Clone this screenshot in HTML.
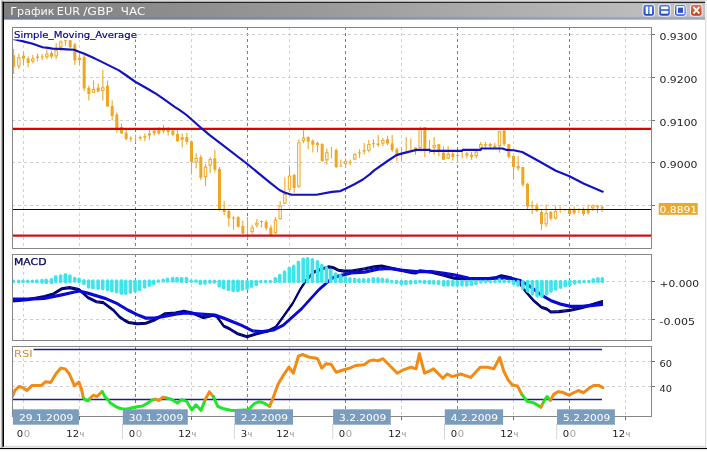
<!DOCTYPE html>
<html lang="ru"><head><meta charset="utf-8"><title>График EUR/GBP ЧАС</title>
<style>
html,body{margin:0;padding:0;background:#fff;}
body{width:707px;height:452px;overflow:hidden;position:relative;font-family:"DejaVu Sans", "Liberation Sans", sans-serif;}
svg{position:absolute;left:0;top:0;display:block;will-change:transform;opacity:0.999}
text{font-family:"DejaVu Sans", "Liberation Sans", sans-serif;}
.ax{font-size:9.1px;fill:#1c1c1c}
.sm{font-size:8px;fill:#8c8c8c}
.dt{font-size:8.8px;fill:#ffffff}
</style></head><body>
<svg width="707" height="452" viewBox="0 0 707 452">
<defs>
<linearGradient id="tb" x1="0" y1="0" x2="1" y2="0"><stop offset="0" stop-color="#7e7e7e"/><stop offset="0.45" stop-color="#9a9a9a"/><stop offset="1" stop-color="#c3c3c3"/></linearGradient>
<linearGradient id="bb" x1="0" y1="0" x2="0" y2="1"><stop offset="0" stop-color="#4f7fe6"/><stop offset="1" stop-color="#1f49bf"/></linearGradient>
<linearGradient id="rb" x1="0" y1="0" x2="0" y2="1"><stop offset="0" stop-color="#e8714f"/><stop offset="1" stop-color="#c23a1c"/></linearGradient>
<linearGradient id="tl" x1="0" y1="0" x2="0" y2="1"><stop offset="0" stop-color="#5a70c8" stop-opacity="0"/><stop offset="0.6" stop-color="#5468b4" stop-opacity="0.33"/><stop offset="1" stop-color="#6274c4" stop-opacity="0.5"/></linearGradient>
<clipPath id="cm"><rect x="12.5" y="27" width="639.5" height="221.5"/></clipPath>
<clipPath id="cd"><rect x="12.5" y="254" width="639.5" height="86.5"/></clipPath>
<clipPath id="cr"><rect x="12.5" y="346" width="639.5" height="80"/></clipPath>
</defs>

<rect x="0" y="0" width="707" height="452" fill="#ffffff"/>
<rect x="2" y="0" width="704" height="2" fill="#dcd8d8"/>
<rect x="0" y="0" width="1.2" height="448" fill="#f2f2f2"/>
<rect x="1.2" y="0" width="1.2" height="448" fill="#b0b0b0"/>
<rect x="2.4" y="1.8" width="1.6" height="445" fill="#000000"/>
<rect x="2.4" y="1.8" width="702.8" height="1.1" fill="#000000"/>
<rect x="0" y="447.9" width="707" height="1.2" fill="#000000"/>
<rect x="705.2" y="0" width="2" height="3" fill="#ececec"/>
<rect x="4" y="2.9" width="701.2" height="16.6" fill="url(#tb)"/>
<rect x="4" y="16.2" width="701.2" height="3.4" fill="url(#tl)"/>
<rect x="705.2" y="19" width="1" height="428" fill="#d6d6d6"/>
<rect x="4" y="445.8" width="702" height="1" fill="#d0d0d0"/>
<rect x="705.3" y="0" width="1.7" height="19.5" fill="#ececec"/>
<text x="10.3" y="15.1" font-size="11" fill="#fafafa" textLength="44.2" lengthAdjust="spacingAndGlyphs">График</text>
<text x="56.8" y="15.1" font-size="11" fill="#fafafa" textLength="23.2" lengthAdjust="spacingAndGlyphs">EUR</text>
<text x="83.2" y="15.1" font-size="11" fill="#fafafa" textLength="29.8" lengthAdjust="spacingAndGlyphs">/GBP</text>
<text x="120.8" y="15.1" font-size="11" fill="#fafafa" textLength="24.6" lengthAdjust="spacingAndGlyphs">ЧАС</text>
<rect x="642.5" y="3.9" width="12.4" height="12.7" rx="3" fill="#ffffff" opacity="0.9"/>
<rect x="643.4" y="4.7" width="10.6" height="11.1" rx="2.4" fill="url(#bb)"/>
<rect x="645.7" y="6.6" width="2.5" height="7.4" fill="#fff"/><rect x="649.5" y="6.6" width="2.5" height="7.4" fill="#fff"/>
<rect x="658.3" y="3.9" width="12.4" height="12.7" rx="3" fill="#ffffff" opacity="0.9"/>
<rect x="659.1999999999999" y="4.7" width="10.6" height="11.1" rx="2.4" fill="url(#bb)"/>
<rect x="661.0999999999999" y="6.5" width="7.2" height="2.7" fill="#fff"/><rect x="661.0999999999999" y="10.9" width="7.2" height="2.7" fill="#fff"/>
<rect x="674.1" y="3.9" width="12.4" height="12.7" rx="3" fill="#ffffff" opacity="0.9"/>
<rect x="675.0" y="4.7" width="10.6" height="11.1" rx="2.4" fill="url(#bb)"/>
<rect x="677.2" y="6.8" width="6.6" height="6.8" fill="none" stroke="#fff" stroke-width="1.5"/><rect x="678.4" y="8.2" width="4.2" height="4" fill="#2c50c0"/>
<rect x="690.1" y="3.9" width="12.4" height="12.7" rx="3" fill="#ffffff" opacity="0.9"/>
<rect x="691.0" y="4.7" width="10.6" height="11.1" rx="2.4" fill="url(#rb)"/>
<path d="M694.0 7.6 L698.8000000000001 12.8 M698.8000000000001 7.6 L694.0 12.8" stroke="#fff" stroke-width="1.9" stroke-linecap="square"/>
<rect x="12.5" y="27.5" width="639.0" height="221.0" fill="#ffffff"/>
<line x1="23.5" y1="27.0" x2="23.5" y2="248.5" stroke="#d2d2d2" stroke-width="1" stroke-dasharray="3 3"/>
<line x1="79.5" y1="27.0" x2="79.5" y2="248.5" stroke="#d2d2d2" stroke-width="1" stroke-dasharray="3 3"/>
<line x1="135.5" y1="27.0" x2="135.5" y2="248.5" stroke="#7c7c84" stroke-width="1" stroke-dasharray="3 3"/>
<line x1="191.5" y1="27.0" x2="191.5" y2="248.5" stroke="#d2d2d2" stroke-width="1" stroke-dasharray="3 3"/>
<line x1="247.5" y1="27.0" x2="247.5" y2="248.5" stroke="#7c7c84" stroke-width="1" stroke-dasharray="3 3"/>
<line x1="289.5" y1="27.0" x2="289.5" y2="248.5" stroke="#d2d2d2" stroke-width="1" stroke-dasharray="3 3"/>
<line x1="345.5" y1="27.0" x2="345.5" y2="248.5" stroke="#7c7c84" stroke-width="1" stroke-dasharray="3 3"/>
<line x1="401.5" y1="27.0" x2="401.5" y2="248.5" stroke="#d2d2d2" stroke-width="1" stroke-dasharray="3 3"/>
<line x1="457.5" y1="27.0" x2="457.5" y2="248.5" stroke="#7c7c84" stroke-width="1" stroke-dasharray="3 3"/>
<line x1="513.5" y1="27.0" x2="513.5" y2="248.5" stroke="#d2d2d2" stroke-width="1" stroke-dasharray="3 3"/>
<line x1="569.5" y1="27.0" x2="569.5" y2="248.5" stroke="#7c7c84" stroke-width="1" stroke-dasharray="3 3"/>
<line x1="625.5" y1="27.0" x2="625.5" y2="248.5" stroke="#d2d2d2" stroke-width="1" stroke-dasharray="3 3"/>
<line x1="12" y1="34.5" x2="651.5" y2="34.5" stroke="#cecece" stroke-width="1" stroke-dasharray="3 3"/>
<line x1="651.5" y1="34.5" x2="655.0" y2="34.5" stroke="#707070" stroke-width="1"/>
<line x1="12" y1="77.5" x2="651.5" y2="77.5" stroke="#cecece" stroke-width="1" stroke-dasharray="3 3"/>
<line x1="651.5" y1="77.5" x2="655.0" y2="77.5" stroke="#707070" stroke-width="1"/>
<line x1="12" y1="120.5" x2="651.5" y2="120.5" stroke="#cecece" stroke-width="1" stroke-dasharray="3 3"/>
<line x1="651.5" y1="120.5" x2="655.0" y2="120.5" stroke="#707070" stroke-width="1"/>
<line x1="12" y1="162.5" x2="651.5" y2="162.5" stroke="#cecece" stroke-width="1" stroke-dasharray="3 3"/>
<line x1="651.5" y1="162.5" x2="655.0" y2="162.5" stroke="#707070" stroke-width="1"/>
<line x1="12" y1="205.5" x2="651.5" y2="205.5" stroke="#cecece" stroke-width="1" stroke-dasharray="3 3"/>
<line x1="651.5" y1="205.5" x2="655.0" y2="205.5" stroke="#707070" stroke-width="1"/>
<rect x="12.5" y="254.5" width="639.0" height="86.0" fill="#ffffff"/>
<line x1="23.5" y1="254.0" x2="23.5" y2="340.5" stroke="#d2d2d2" stroke-width="1" stroke-dasharray="3 3"/>
<line x1="79.5" y1="254.0" x2="79.5" y2="340.5" stroke="#d2d2d2" stroke-width="1" stroke-dasharray="3 3"/>
<line x1="135.5" y1="254.0" x2="135.5" y2="340.5" stroke="#7c7c84" stroke-width="1" stroke-dasharray="3 3"/>
<line x1="191.5" y1="254.0" x2="191.5" y2="340.5" stroke="#d2d2d2" stroke-width="1" stroke-dasharray="3 3"/>
<line x1="247.5" y1="254.0" x2="247.5" y2="340.5" stroke="#7c7c84" stroke-width="1" stroke-dasharray="3 3"/>
<line x1="289.5" y1="254.0" x2="289.5" y2="340.5" stroke="#d2d2d2" stroke-width="1" stroke-dasharray="3 3"/>
<line x1="345.5" y1="254.0" x2="345.5" y2="340.5" stroke="#7c7c84" stroke-width="1" stroke-dasharray="3 3"/>
<line x1="401.5" y1="254.0" x2="401.5" y2="340.5" stroke="#d2d2d2" stroke-width="1" stroke-dasharray="3 3"/>
<line x1="457.5" y1="254.0" x2="457.5" y2="340.5" stroke="#7c7c84" stroke-width="1" stroke-dasharray="3 3"/>
<line x1="513.5" y1="254.0" x2="513.5" y2="340.5" stroke="#d2d2d2" stroke-width="1" stroke-dasharray="3 3"/>
<line x1="569.5" y1="254.0" x2="569.5" y2="340.5" stroke="#7c7c84" stroke-width="1" stroke-dasharray="3 3"/>
<line x1="625.5" y1="254.0" x2="625.5" y2="340.5" stroke="#d2d2d2" stroke-width="1" stroke-dasharray="3 3"/>
<line x1="12" y1="281.5" x2="651.5" y2="281.5" stroke="#cecece" stroke-width="1" stroke-dasharray="3 3"/>
<line x1="651.5" y1="281.5" x2="655.0" y2="281.5" stroke="#707070" stroke-width="1"/>
<line x1="12" y1="319.5" x2="651.5" y2="319.5" stroke="#cecece" stroke-width="1" stroke-dasharray="3 3"/>
<line x1="651.5" y1="319.5" x2="655.0" y2="319.5" stroke="#707070" stroke-width="1"/>
<rect x="12.5" y="346.5" width="639.0" height="70.0" fill="#ffffff"/>
<line x1="23.5" y1="346.0" x2="23.5" y2="416.5" stroke="#d2d2d2" stroke-width="1" stroke-dasharray="3 3"/>
<line x1="79.5" y1="346.0" x2="79.5" y2="416.5" stroke="#d2d2d2" stroke-width="1" stroke-dasharray="3 3"/>
<line x1="135.5" y1="346.0" x2="135.5" y2="416.5" stroke="#7c7c84" stroke-width="1" stroke-dasharray="3 3"/>
<line x1="191.5" y1="346.0" x2="191.5" y2="416.5" stroke="#d2d2d2" stroke-width="1" stroke-dasharray="3 3"/>
<line x1="247.5" y1="346.0" x2="247.5" y2="416.5" stroke="#7c7c84" stroke-width="1" stroke-dasharray="3 3"/>
<line x1="289.5" y1="346.0" x2="289.5" y2="416.5" stroke="#d2d2d2" stroke-width="1" stroke-dasharray="3 3"/>
<line x1="345.5" y1="346.0" x2="345.5" y2="416.5" stroke="#7c7c84" stroke-width="1" stroke-dasharray="3 3"/>
<line x1="401.5" y1="346.0" x2="401.5" y2="416.5" stroke="#d2d2d2" stroke-width="1" stroke-dasharray="3 3"/>
<line x1="457.5" y1="346.0" x2="457.5" y2="416.5" stroke="#7c7c84" stroke-width="1" stroke-dasharray="3 3"/>
<line x1="513.5" y1="346.0" x2="513.5" y2="416.5" stroke="#d2d2d2" stroke-width="1" stroke-dasharray="3 3"/>
<line x1="569.5" y1="346.0" x2="569.5" y2="416.5" stroke="#7c7c84" stroke-width="1" stroke-dasharray="3 3"/>
<line x1="625.5" y1="346.0" x2="625.5" y2="416.5" stroke="#d2d2d2" stroke-width="1" stroke-dasharray="3 3"/>
<line x1="12" y1="361.5" x2="651.5" y2="361.5" stroke="#cecece" stroke-width="1" stroke-dasharray="3 3"/>
<line x1="651.5" y1="361.5" x2="655.0" y2="361.5" stroke="#707070" stroke-width="1"/>
<line x1="12" y1="386.5" x2="651.5" y2="386.5" stroke="#cecece" stroke-width="1" stroke-dasharray="3 3"/>
<line x1="651.5" y1="386.5" x2="655.0" y2="386.5" stroke="#707070" stroke-width="1"/>
<g clip-path="url(#cm)">
<line x1="13.60" y1="49" x2="13.60" y2="74" stroke="#eea724" stroke-width="1.1"/>
<rect x="12.10" y="55.4" width="3" height="11.6" fill="#eea724"/>
<line x1="18.84" y1="53.6" x2="18.84" y2="69.2" stroke="#eea724" stroke-width="1.1"/>
<rect x="17.64" y="57.6" width="2.4" height="8.4" fill="#fffdf4" stroke="#eea724" stroke-width="1"/>
<line x1="23.50" y1="51.5" x2="23.50" y2="65" stroke="#eea724" stroke-width="1.1"/>
<rect x="22.00" y="55.7" width="3" height="2.9" fill="#eea724"/>
<line x1="28.17" y1="56.5" x2="28.17" y2="67" stroke="#eea724" stroke-width="1.1"/>
<rect x="26.67" y="58.6" width="3" height="4.2" fill="#eea724"/>
<line x1="32.84" y1="55" x2="32.84" y2="63.5" stroke="#eea724" stroke-width="1.1"/>
<rect x="31.64" y="58.699999999999996" width="2.4" height="2.3" fill="#fffdf4" stroke="#eea724" stroke-width="1"/>
<line x1="37.50" y1="53.6" x2="37.50" y2="61.4" stroke="#eea724" stroke-width="1.1"/>
<rect x="36.00" y="56.5" width="3" height="1.5" fill="#eea724"/>
<line x1="42.17" y1="54.3" x2="42.17" y2="60" stroke="#eea724" stroke-width="1.1"/>
<rect x="40.67" y="56.5" width="3" height="1.0" fill="#eea724"/>
<line x1="46.84" y1="49.4" x2="46.84" y2="59.3" stroke="#eea724" stroke-width="1.1"/>
<rect x="45.64" y="54.0" width="2.4" height="2.8" fill="#fffdf4" stroke="#eea724" stroke-width="1"/>
<line x1="51.50" y1="50.8" x2="51.50" y2="58.6" stroke="#eea724" stroke-width="1.1"/>
<rect x="50.00" y="52.9" width="3" height="3.6" fill="#eea724"/>
<line x1="56.17" y1="43.3" x2="56.17" y2="59.3" stroke="#eea724" stroke-width="1.1"/>
<rect x="54.97" y="50.4" width="2.4" height="5.5" fill="#fffdf4" stroke="#eea724" stroke-width="1"/>
<line x1="60.84" y1="40.2" x2="60.84" y2="51.5" stroke="#eea724" stroke-width="1.1"/>
<rect x="59.64" y="42.0" width="2.4" height="4.8" fill="#fffdf4" stroke="#eea724" stroke-width="1"/>
<line x1="65.50" y1="40.2" x2="65.50" y2="45.8" stroke="#eea724" stroke-width="1.1"/>
<rect x="64.00" y="40.2" width="3" height="1.0" fill="#eea724"/>
<line x1="70.17" y1="40.2" x2="70.17" y2="48" stroke="#eea724" stroke-width="1.1"/>
<rect x="68.67" y="40.2" width="3" height="7.0" fill="#eea724"/>
<line x1="74.84" y1="43" x2="74.84" y2="65" stroke="#eea724" stroke-width="1.1"/>
<rect x="73.34" y="44.5" width="3" height="16.0" fill="#eea724"/>
<line x1="79.50" y1="53.6" x2="79.50" y2="65" stroke="#eea724" stroke-width="1.1"/>
<rect x="78.00" y="57.9" width="3" height="2.1" fill="#eea724"/>
<line x1="84.17" y1="55" x2="84.17" y2="91.2" stroke="#eea724" stroke-width="1.1"/>
<rect x="82.67" y="57.2" width="3" height="31.2" fill="#eea724"/>
<line x1="88.84" y1="85.6" x2="88.84" y2="100.5" stroke="#eea724" stroke-width="1.1"/>
<rect x="87.34" y="87.7" width="3" height="6.3" fill="#eea724"/>
<line x1="93.50" y1="80.6" x2="93.50" y2="92.7" stroke="#eea724" stroke-width="1.1"/>
<rect x="92.30" y="89.4" width="2.4" height="2.9" fill="#fffdf4" stroke="#eea724" stroke-width="1"/>
<line x1="98.17" y1="83.5" x2="98.17" y2="92" stroke="#eea724" stroke-width="1.1"/>
<rect x="96.67" y="87.7" width="3" height="3.8" fill="#eea724"/>
<line x1="102.84" y1="70" x2="102.84" y2="100.5" stroke="#eea724" stroke-width="1.1"/>
<rect x="101.64" y="87.7" width="2.4" height="2.9" fill="#fffdf4" stroke="#eea724" stroke-width="1"/>
<line x1="107.50" y1="80.6" x2="107.50" y2="106.8" stroke="#eea724" stroke-width="1.1"/>
<rect x="106.00" y="85.6" width="3" height="20.9" fill="#eea724"/>
<line x1="112.17" y1="100.5" x2="112.17" y2="120.3" stroke="#eea724" stroke-width="1.1"/>
<rect x="110.67" y="106" width="3" height="10.0" fill="#eea724"/>
<line x1="116.84" y1="112.5" x2="116.84" y2="132.7" stroke="#eea724" stroke-width="1.1"/>
<rect x="115.34" y="114.6" width="3" height="14.9" fill="#eea724"/>
<line x1="121.50" y1="123.5" x2="121.50" y2="134" stroke="#eea724" stroke-width="1.1"/>
<rect x="120.00" y="127" width="3" height="6.4" fill="#eea724"/>
<line x1="126.17" y1="129" x2="126.17" y2="140.5" stroke="#eea724" stroke-width="1.1"/>
<rect x="124.67" y="132.7" width="3" height="6.3" fill="#eea724"/>
<line x1="130.84" y1="136.2" x2="130.84" y2="142" stroke="#eea724" stroke-width="1.1"/>
<rect x="129.34" y="137.7" width="3" height="1.0" fill="#eea724"/>
<line x1="135.50" y1="134.8" x2="135.50" y2="142.6" stroke="#eea724" stroke-width="1.1"/>
<line x1="140.17" y1="135.5" x2="140.17" y2="140.5" stroke="#eea724" stroke-width="1.1"/>
<rect x="138.67" y="137" width="3" height="1.4" fill="#eea724"/>
<line x1="144.84" y1="133.4" x2="144.84" y2="141.2" stroke="#eea724" stroke-width="1.1"/>
<rect x="143.34" y="136.2" width="3" height="1.5" fill="#eea724"/>
<line x1="149.50" y1="128.5" x2="149.50" y2="139.8" stroke="#eea724" stroke-width="1.1"/>
<rect x="148.00" y="133.4" width="3" height="2.1" fill="#eea724"/>
<line x1="154.17" y1="127.7" x2="154.17" y2="135.5" stroke="#eea724" stroke-width="1.1"/>
<rect x="152.67" y="130.6" width="3" height="2.8" fill="#eea724"/>
<line x1="158.84" y1="127" x2="158.84" y2="134.8" stroke="#eea724" stroke-width="1.1"/>
<rect x="157.34" y="129.9" width="3" height="3.5" fill="#eea724"/>
<line x1="163.50" y1="124.9" x2="163.50" y2="133.4" stroke="#eea724" stroke-width="1.1"/>
<rect x="162.00" y="128.5" width="3" height="2.8" fill="#eea724"/>
<line x1="168.17" y1="127" x2="168.17" y2="135.5" stroke="#eea724" stroke-width="1.1"/>
<rect x="166.67" y="129.2" width="3" height="2.8" fill="#eea724"/>
<line x1="172.84" y1="129.9" x2="172.84" y2="136.2" stroke="#eea724" stroke-width="1.1"/>
<rect x="171.34" y="130.6" width="3" height="4.2" fill="#eea724"/>
<line x1="177.50" y1="129.2" x2="177.50" y2="141.9" stroke="#eea724" stroke-width="1.1"/>
<rect x="176.00" y="134" width="3" height="7.2" fill="#eea724"/>
<line x1="182.17" y1="133.4" x2="182.17" y2="147.6" stroke="#eea724" stroke-width="1.1"/>
<rect x="180.67" y="137" width="3" height="2.8" fill="#eea724"/>
<line x1="186.84" y1="132.7" x2="186.84" y2="144.7" stroke="#eea724" stroke-width="1.1"/>
<rect x="185.34" y="137" width="3" height="4.9" fill="#eea724"/>
<line x1="191.50" y1="140.5" x2="191.50" y2="174.5" stroke="#eea724" stroke-width="1.1"/>
<rect x="190.00" y="141.3" width="3" height="20.7" fill="#eea724"/>
<line x1="196.17" y1="153.3" x2="196.17" y2="168.5" stroke="#eea724" stroke-width="1.1"/>
<rect x="194.97" y="158.4" width="2.4" height="3.5" fill="#fffdf4" stroke="#eea724" stroke-width="1"/>
<line x1="200.84" y1="155" x2="200.84" y2="180.3" stroke="#eea724" stroke-width="1.1"/>
<rect x="199.34" y="157" width="3" height="20.7" fill="#eea724"/>
<line x1="205.50" y1="164" x2="205.50" y2="186" stroke="#eea724" stroke-width="1.1"/>
<rect x="204.30" y="167.20000000000002" width="2.4" height="9.4" fill="#fffdf4" stroke="#eea724" stroke-width="1"/>
<line x1="210.17" y1="157" x2="210.17" y2="173.2" stroke="#eea724" stroke-width="1.1"/>
<rect x="208.97" y="159.4" width="2.4" height="5.7" fill="#fffdf4" stroke="#eea724" stroke-width="1"/>
<line x1="214.84" y1="149.9" x2="214.84" y2="172.5" stroke="#eea724" stroke-width="1.1"/>
<rect x="213.34" y="158.4" width="3" height="11.3" fill="#eea724"/>
<line x1="219.50" y1="167" x2="219.50" y2="210.5" stroke="#eea724" stroke-width="1.1"/>
<rect x="218.00" y="169" width="3" height="40.0" fill="#eea724"/>
<line x1="224.17" y1="201.3" x2="224.17" y2="215.5" stroke="#eea724" stroke-width="1.1"/>
<rect x="222.67" y="209.8" width="3" height="2.2" fill="#eea724"/>
<line x1="228.84" y1="209.8" x2="228.84" y2="226.8" stroke="#eea724" stroke-width="1.1"/>
<rect x="227.34" y="211" width="3" height="7.3" fill="#eea724"/>
<line x1="233.50" y1="216.2" x2="233.50" y2="229.7" stroke="#eea724" stroke-width="1.1"/>
<rect x="232.00" y="217.6" width="3" height="1.0" fill="#eea724"/>
<line x1="238.17" y1="216.2" x2="238.17" y2="227.5" stroke="#eea724" stroke-width="1.1"/>
<rect x="236.67" y="217" width="3" height="9.8" fill="#eea724"/>
<line x1="242.84" y1="220.5" x2="242.84" y2="234" stroke="#eea724" stroke-width="1.1"/>
<rect x="241.34" y="226" width="3" height="7.6" fill="#eea724"/>
<line x1="247.50" y1="217" x2="247.50" y2="238.9" stroke="#eea724" stroke-width="1.1"/>
<line x1="252.17" y1="224.7" x2="252.17" y2="234" stroke="#eea724" stroke-width="1.1"/>
<rect x="250.97" y="227.9" width="2.4" height="3.5" fill="#fffdf4" stroke="#eea724" stroke-width="1"/>
<line x1="256.84" y1="219" x2="256.84" y2="227.5" stroke="#eea724" stroke-width="1.1"/>
<rect x="255.64" y="223.3" width="2.4" height="1.7" fill="#fffdf4" stroke="#eea724" stroke-width="1"/>
<line x1="261.51" y1="220.5" x2="261.51" y2="227.5" stroke="#eea724" stroke-width="1.1"/>
<rect x="260.01" y="221" width="3" height="1.0" fill="#eea724"/>
<line x1="266.17" y1="219.7" x2="266.17" y2="230.4" stroke="#eea724" stroke-width="1.1"/>
<rect x="264.67" y="221.9" width="3" height="6.3" fill="#eea724"/>
<line x1="270.84" y1="224.7" x2="270.84" y2="236" stroke="#eea724" stroke-width="1.1"/>
<rect x="269.34" y="227.5" width="3" height="8.1" fill="#eea724"/>
<line x1="275.51" y1="217" x2="275.51" y2="234" stroke="#eea724" stroke-width="1.1"/>
<rect x="274.31" y="220.1" width="2.4" height="12.7" fill="#fffdf4" stroke="#eea724" stroke-width="1"/>
<line x1="280.17" y1="201.3" x2="280.17" y2="219.7" stroke="#eea724" stroke-width="1.1"/>
<rect x="278.97" y="206.0" width="2.4" height="12.6" fill="#fffdf4" stroke="#eea724" stroke-width="1"/>
<line x1="284.84" y1="177.2" x2="284.84" y2="204" stroke="#eea724" stroke-width="1.1"/>
<rect x="283.64" y="194.4" width="2.4" height="8.7" fill="#fffdf4" stroke="#eea724" stroke-width="1"/>
<line x1="289.51" y1="166.4" x2="289.51" y2="191.9" stroke="#eea724" stroke-width="1.1"/>
<rect x="288.31" y="176.1" width="2.4" height="13.1" fill="#fffdf4" stroke="#eea724" stroke-width="1"/>
<line x1="294.17" y1="174" x2="294.17" y2="192.7" stroke="#eea724" stroke-width="1.1"/>
<rect x="292.67" y="174.9" width="3" height="13.1" fill="#eea724"/>
<line x1="298.84" y1="139.3" x2="298.84" y2="188" stroke="#eea724" stroke-width="1.1"/>
<rect x="297.64" y="142.8" width="2.4" height="43.3" fill="#fffdf4" stroke="#eea724" stroke-width="1"/>
<line x1="303.51" y1="129" x2="303.51" y2="143.2" stroke="#eea724" stroke-width="1.1"/>
<rect x="302.31" y="138.1" width="2.4" height="2.3" fill="#fffdf4" stroke="#eea724" stroke-width="1"/>
<line x1="308.17" y1="136.2" x2="308.17" y2="149.3" stroke="#eea724" stroke-width="1.1"/>
<rect x="306.67" y="137" width="3" height="4.6" fill="#eea724"/>
<line x1="312.84" y1="139.3" x2="312.84" y2="152.4" stroke="#eea724" stroke-width="1.1"/>
<rect x="311.34" y="140.8" width="3" height="3.9" fill="#eea724"/>
<line x1="317.51" y1="141.6" x2="317.51" y2="152.4" stroke="#eea724" stroke-width="1.1"/>
<rect x="316.01" y="143" width="3" height="2.0" fill="#eea724"/>
<line x1="322.17" y1="143.2" x2="322.17" y2="161.7" stroke="#eea724" stroke-width="1.1"/>
<rect x="320.67" y="143.9" width="3" height="17.1" fill="#eea724"/>
<line x1="326.84" y1="148.6" x2="326.84" y2="164.8" stroke="#eea724" stroke-width="1.1"/>
<rect x="325.64" y="152.8" width="2.4" height="7.0" fill="#fffdf4" stroke="#eea724" stroke-width="1"/>
<line x1="331.51" y1="147" x2="331.51" y2="158.6" stroke="#eea724" stroke-width="1.1"/>
<line x1="336.17" y1="148.6" x2="336.17" y2="167.9" stroke="#eea724" stroke-width="1.1"/>
<rect x="334.67" y="150" width="3" height="17.2" fill="#eea724"/>
<line x1="340.84" y1="159.4" x2="340.84" y2="166.4" stroke="#eea724" stroke-width="1.1"/>
<rect x="339.34" y="165.6" width="3" height="1.0" fill="#eea724"/>
<line x1="345.51" y1="158.6" x2="345.51" y2="167.9" stroke="#eea724" stroke-width="1.1"/>
<rect x="344.31" y="161.4" width="2.4" height="2.2" fill="#fffdf4" stroke="#eea724" stroke-width="1"/>
<line x1="350.17" y1="159.4" x2="350.17" y2="165.6" stroke="#eea724" stroke-width="1.1"/>
<rect x="348.67" y="161.7" width="3" height="1.0" fill="#eea724"/>
<line x1="354.84" y1="153.2" x2="354.84" y2="160.2" stroke="#eea724" stroke-width="1.1"/>
<rect x="353.64" y="154.4" width="2.4" height="4.6" fill="#fffdf4" stroke="#eea724" stroke-width="1"/>
<line x1="359.51" y1="149.3" x2="359.51" y2="157.9" stroke="#eea724" stroke-width="1.1"/>
<rect x="358.01" y="152.4" width="3" height="1.0" fill="#eea724"/>
<line x1="364.17" y1="143" x2="364.17" y2="154.5" stroke="#eea724" stroke-width="1.1"/>
<rect x="362.67" y="150" width="3" height="1.5" fill="#eea724"/>
<line x1="368.84" y1="140" x2="368.84" y2="152.5" stroke="#eea724" stroke-width="1.1"/>
<rect x="367.64" y="144.4" width="2.4" height="5.9" fill="#fffdf4" stroke="#eea724" stroke-width="1"/>
<line x1="373.51" y1="139.2" x2="373.51" y2="147.7" stroke="#eea724" stroke-width="1.1"/>
<rect x="372.01" y="143.2" width="3" height="1.0" fill="#eea724"/>
<line x1="378.17" y1="135" x2="378.17" y2="147" stroke="#eea724" stroke-width="1.1"/>
<rect x="376.67" y="143.5" width="3" height="1.5" fill="#eea724"/>
<line x1="382.84" y1="137.8" x2="382.84" y2="146.3" stroke="#eea724" stroke-width="1.1"/>
<rect x="381.64" y="140.4" width="2.4" height="2.7" fill="#fffdf4" stroke="#eea724" stroke-width="1"/>
<line x1="387.51" y1="135.7" x2="387.51" y2="145" stroke="#eea724" stroke-width="1.1"/>
<rect x="386.01" y="139.2" width="3" height="4.3" fill="#eea724"/>
<line x1="392.17" y1="135" x2="392.17" y2="152" stroke="#eea724" stroke-width="1.1"/>
<rect x="390.67" y="143.5" width="3" height="6.5" fill="#eea724"/>
<line x1="396.84" y1="147.7" x2="396.84" y2="161.2" stroke="#eea724" stroke-width="1.1"/>
<rect x="395.34" y="149.2" width="3" height="6.3" fill="#eea724"/>
<line x1="401.51" y1="147" x2="401.51" y2="161.2" stroke="#eea724" stroke-width="1.1"/>
<line x1="406.17" y1="137" x2="406.17" y2="152.7" stroke="#eea724" stroke-width="1.1"/>
<line x1="410.84" y1="138.5" x2="410.84" y2="150" stroke="#eea724" stroke-width="1.1"/>
<line x1="415.51" y1="147" x2="415.51" y2="154.8" stroke="#eea724" stroke-width="1.1"/>
<rect x="414.01" y="147.7" width="3" height="2.3" fill="#eea724"/>
<line x1="420.17" y1="126.5" x2="420.17" y2="148.5" stroke="#eea724" stroke-width="1.1"/>
<rect x="418.97" y="129.4" width="2.4" height="18.2" fill="#fffdf4" stroke="#eea724" stroke-width="1"/>
<line x1="424.84" y1="127.2" x2="424.84" y2="157" stroke="#eea724" stroke-width="1.1"/>
<rect x="423.34" y="127.2" width="3" height="21.3" fill="#eea724"/>
<line x1="429.51" y1="140" x2="429.51" y2="153.4" stroke="#eea724" stroke-width="1.1"/>
<line x1="434.17" y1="137" x2="434.17" y2="154.8" stroke="#eea724" stroke-width="1.1"/>
<rect x="432.97" y="145.4" width="2.4" height="1.9" fill="#fffdf4" stroke="#eea724" stroke-width="1"/>
<line x1="438.84" y1="144.2" x2="438.84" y2="156.2" stroke="#eea724" stroke-width="1.1"/>
<rect x="437.34" y="144.2" width="3" height="5.8" fill="#eea724"/>
<line x1="443.51" y1="146.3" x2="443.51" y2="159.8" stroke="#eea724" stroke-width="1.1"/>
<rect x="442.01" y="152.7" width="3" height="7.1" fill="#eea724"/>
<line x1="448.17" y1="146.3" x2="448.17" y2="159" stroke="#eea724" stroke-width="1.1"/>
<rect x="446.97" y="154.4" width="2.4" height="3.6" fill="#fffdf4" stroke="#eea724" stroke-width="1"/>
<line x1="452.84" y1="152" x2="452.84" y2="160.5" stroke="#eea724" stroke-width="1.1"/>
<rect x="451.34" y="153.7" width="3" height="3.3" fill="#eea724"/>
<line x1="457.51" y1="151.5" x2="457.51" y2="162" stroke="#eea724" stroke-width="1.1"/>
<rect x="456.01" y="155" width="3" height="1.0" fill="#eea724"/>
<line x1="462.17" y1="150.6" x2="462.17" y2="158.4" stroke="#eea724" stroke-width="1.1"/>
<line x1="466.84" y1="152" x2="466.84" y2="158.4" stroke="#eea724" stroke-width="1.1"/>
<rect x="465.34" y="153.4" width="3" height="2.1" fill="#eea724"/>
<line x1="471.51" y1="152" x2="471.51" y2="159.8" stroke="#eea724" stroke-width="1.1"/>
<rect x="470.01" y="154.8" width="3" height="2.2" fill="#eea724"/>
<line x1="476.17" y1="150.6" x2="476.17" y2="158.4" stroke="#eea724" stroke-width="1.1"/>
<rect x="474.97" y="152.1" width="2.4" height="3.5" fill="#fffdf4" stroke="#eea724" stroke-width="1"/>
<line x1="480.84" y1="142" x2="480.84" y2="151.3" stroke="#eea724" stroke-width="1.1"/>
<rect x="479.64" y="144.6" width="2.4" height="3.5" fill="#fffdf4" stroke="#eea724" stroke-width="1"/>
<line x1="485.51" y1="142" x2="485.51" y2="148.5" stroke="#eea724" stroke-width="1.1"/>
<rect x="484.01" y="144.2" width="3" height="1.4" fill="#eea724"/>
<line x1="490.17" y1="142.8" x2="490.17" y2="148.5" stroke="#eea724" stroke-width="1.1"/>
<rect x="488.67" y="144" width="3" height="2.3" fill="#eea724"/>
<line x1="494.84" y1="142.8" x2="494.84" y2="148.5" stroke="#eea724" stroke-width="1.1"/>
<rect x="493.34" y="145.6" width="3" height="2.1" fill="#eea724"/>
<line x1="499.51" y1="130.7" x2="499.51" y2="152.7" stroke="#eea724" stroke-width="1.1"/>
<rect x="498.31" y="131.9" width="2.4" height="14.0" fill="#fffdf4" stroke="#eea724" stroke-width="1"/>
<line x1="504.17" y1="130" x2="504.17" y2="146.3" stroke="#eea724" stroke-width="1.1"/>
<rect x="502.67" y="130.5" width="3" height="13.7" fill="#eea724"/>
<line x1="508.84" y1="144.2" x2="508.84" y2="158.4" stroke="#eea724" stroke-width="1.1"/>
<rect x="507.34" y="144.2" width="3" height="12.8" fill="#eea724"/>
<line x1="513.51" y1="155.5" x2="513.51" y2="179" stroke="#eea724" stroke-width="1.1"/>
<rect x="512.01" y="156" width="3" height="11.0" fill="#eea724"/>
<line x1="518.17" y1="156" x2="518.17" y2="170.5" stroke="#eea724" stroke-width="1.1"/>
<rect x="516.67" y="166" width="3" height="2.5" fill="#eea724"/>
<line x1="522.84" y1="167" x2="522.84" y2="186.7" stroke="#eea724" stroke-width="1.1"/>
<rect x="521.34" y="167" width="3" height="17.8" fill="#eea724"/>
<line x1="527.51" y1="183" x2="527.51" y2="209.2" stroke="#eea724" stroke-width="1.1"/>
<rect x="526.01" y="183.8" width="3" height="22.6" fill="#eea724"/>
<line x1="532.17" y1="200.8" x2="532.17" y2="213.9" stroke="#eea724" stroke-width="1.1"/>
<rect x="530.67" y="205" width="3" height="1.4" fill="#eea724"/>
<line x1="536.84" y1="203.6" x2="536.84" y2="212" stroke="#eea724" stroke-width="1.1"/>
<rect x="535.34" y="205.5" width="3" height="5.5" fill="#eea724"/>
<line x1="541.51" y1="209.2" x2="541.51" y2="229.9" stroke="#eea724" stroke-width="1.1"/>
<rect x="540.01" y="212" width="3" height="12.2" fill="#eea724"/>
<line x1="546.17" y1="204.5" x2="546.17" y2="227" stroke="#eea724" stroke-width="1.1"/>
<rect x="544.97" y="213.4" width="2.4" height="10.4" fill="#fffdf4" stroke="#eea724" stroke-width="1"/>
<line x1="550.84" y1="211" x2="550.84" y2="220.5" stroke="#eea724" stroke-width="1.1"/>
<rect x="549.34" y="212" width="3" height="6.6" fill="#eea724"/>
<line x1="555.51" y1="205.5" x2="555.51" y2="219.5" stroke="#eea724" stroke-width="1.1"/>
<rect x="554.31" y="211.4" width="2.4" height="6.8" fill="#fffdf4" stroke="#eea724" stroke-width="1"/>
<line x1="560.17" y1="206.4" x2="560.17" y2="213" stroke="#eea724" stroke-width="1.1"/>
<line x1="564.84" y1="209.2" x2="564.84" y2="211" stroke="#eea724" stroke-width="1.1"/>
<line x1="569.51" y1="207.3" x2="569.51" y2="214.8" stroke="#eea724" stroke-width="1.1"/>
<rect x="568.01" y="209.8" width="3" height="4.2" fill="#eea724"/>
<line x1="574.17" y1="206.4" x2="574.17" y2="214.8" stroke="#eea724" stroke-width="1.1"/>
<rect x="572.67" y="210" width="3" height="3.0" fill="#eea724"/>
<line x1="578.84" y1="208.3" x2="578.84" y2="213" stroke="#eea724" stroke-width="1.1"/>
<line x1="583.51" y1="207.3" x2="583.51" y2="215.8" stroke="#eea724" stroke-width="1.1"/>
<rect x="582.01" y="209.2" width="3" height="4.8" fill="#eea724"/>
<line x1="588.17" y1="204.5" x2="588.17" y2="214.8" stroke="#eea724" stroke-width="1.1"/>
<rect x="586.67" y="210" width="3" height="3.0" fill="#eea724"/>
<line x1="592.84" y1="204.5" x2="592.84" y2="211" stroke="#eea724" stroke-width="1.1"/>
<rect x="591.64" y="205.9" width="2.4" height="2.0" fill="#fffdf4" stroke="#eea724" stroke-width="1"/>
<line x1="597.51" y1="205.5" x2="597.51" y2="213" stroke="#eea724" stroke-width="1.1"/>
<rect x="596.01" y="205.5" width="3" height="1.8" fill="#eea724"/>
<line x1="602.17" y1="205.5" x2="602.17" y2="212" stroke="#eea724" stroke-width="1.1"/>
<rect x="600.67" y="207" width="3" height="1.5" fill="#eea724"/>
<line x1="12.5" y1="209.5" x2="651.5" y2="209.5" stroke="#101010" stroke-width="1.2"/>
<line x1="12.5" y1="128.8" x2="651.5" y2="128.8" stroke="#e00000" stroke-width="2.2"/>
<line x1="12.5" y1="235.7" x2="651.5" y2="235.7" stroke="#c81414" stroke-width="2.2"/>
<polyline fill="none" stroke="#1212c4" stroke-width="2.15" stroke-linejoin="round" stroke-linecap="round" points="12.5,38.8 24.2,41.6 32.7,43.7 42.6,47.2 48,47.9 52.5,48.6 60,48.9 66.7,49.4 74,49.8 79.6,52.0 83.8,53.6 95,58.6 99.8,60.9 109.8,65.9 118.9,70.4 125.7,75 135.6,82 145.8,87.7 154.3,92.7 162.8,98.3 175,107.1 179.4,109.8 186.5,115 202,128.7 210,135.3 222.5,144.9 247.3,164 270,182.6 279.4,190 284.4,192.5 291.7,194.7 316.4,194.7 331.9,191.9 340.4,191.1 345.4,188.8 354.4,184.2 362.9,179.5 370,174.1 374.2,170.4 388.3,160.5 396.4,155.1 402.5,153.4 412.4,150.9 416.7,149.9 429.4,149.9 430.8,150.9 462,150.9 462.7,149.9 480.5,149.9 481.4,148.5 502.4,148.5 506.7,149.9 513.7,150.3 522.2,152 535,159 542.6,163.2 555.8,170.7 569.5,176.3 584,183.8 602.7,191.7"/>
</g>
<rect x="13" y="28" width="125" height="11.5" fill="#ffffff"/>
<text x="14" y="37.8" font-size="9" fill="#000080" stroke="#000080" stroke-width="0.15" textLength="123" lengthAdjust="spacingAndGlyphs">Simple_Moving_Average</text>
<g clip-path="url(#cd)">
<polyline fill="none" stroke="#000078" stroke-width="1.35" stroke-linejoin="round" stroke-linecap="round" points="12.5,300.0 27.3,298.8 44.5,295.6 53.2,293.1 61.8,287.9 69.6,286.7 79.1,288.7 87.7,296.5 96.4,300.8 103.3,301.7 113.6,309.5 120,316.4 124,319.0 128.6,321.6 137.3,322.9 145.9,322.4 154.5,319.0 164.9,312.9 175.3,312.1 183.9,310.3 192.5,312.1 202.9,316.7 213.3,314.3 216.7,315.5 223.6,325.0 230,328.2 237.6,332.9 247.1,335.8 256.6,332.9 268,330.1 275.6,326.3 283.2,315.8 292.7,302.5 300.3,288.3 306,279.7 313.7,271.2 321.3,268.3 328.9,266.0 333.6,266.8 338.4,269.3 344.1,270.2 351.4,270.2 364.7,267.9 374.2,266.0 381.8,265.1 389.4,266.8 400.8,269.3 412.2,271.7 416,272.1 419.8,269.8 431.3,271.2 442.7,274.0 454,277.4 461.4,277.8 472.8,277.8 488,277.8 495.6,276.9 501.3,275.0 510.8,276.9 518.4,280.7 526,291.1 533.7,299.7 541.3,306.3 547,308.2 550.8,311.1 559,310.7 570.4,309.4 581.8,306.7 593.2,303.5 602.4,300.6"/>
<polyline fill="none" stroke="#000078" stroke-width="1.35" stroke-linejoin="round" stroke-linecap="round" points="12.5,300.9 27.3,299.7 44.5,296.5 53.2,294.0 61.8,288.8 69.6,287.6 79.1,289.6 87.7,297.4 96.4,301.7 103.3,302.6 113.6,310.4 120,317.3 124,319.9 128.6,322.5 137.3,323.8 145.9,323.3 154.5,319.9 164.9,313.8 175.3,313.0 183.9,311.2 192.5,313.0 202.9,317.6 213.3,315.2 216.7,316.4 223.6,325.9 230,329.1 237.6,333.8 247.1,336.7 256.6,333.8 268,331.0 275.6,327.2 283.2,316.7 292.7,303.4 300.3,289.2 306,280.6 313.7,272.1 321.3,269.2 328.9,266.9 333.6,267.7 338.4,270.2 344.1,271.1 351.4,271.1 364.7,268.8 374.2,266.9 381.8,266.0 389.4,267.7 400.8,270.2 412.2,272.6 416,273.0 419.8,270.7 431.3,272.1 442.7,274.9 454,278.3 461.4,278.7 472.8,278.7 488,278.7 495.6,277.8 501.3,275.9 510.8,277.8 518.4,281.6 526,292.0 533.7,300.6 541.3,307.2 547,309.1 550.8,312.0 559,311.6 570.4,310.3 581.8,307.6 593.2,304.4 602.4,301.5"/>
<polyline fill="none" stroke="#000078" stroke-width="1.35" stroke-linejoin="round" stroke-linecap="round" points="12.5,301.8 27.3,300.6 44.5,297.4 53.2,294.9 61.8,289.7 69.6,288.5 79.1,290.5 87.7,298.3 96.4,302.6 103.3,303.5 113.6,311.3 120,318.2 124,320.8 128.6,323.4 137.3,324.7 145.9,324.2 154.5,320.8 164.9,314.7 175.3,313.9 183.9,312.1 192.5,313.9 202.9,318.5 213.3,316.1 216.7,317.3 223.6,326.8 230,330.0 237.6,334.7 247.1,337.6 256.6,334.7 268,331.9 275.6,328.1 283.2,317.6 292.7,304.3 300.3,290.1 306,281.5 313.7,273.0 321.3,270.1 328.9,267.8 333.6,268.6 338.4,271.1 344.1,272.0 351.4,272.0 364.7,269.7 374.2,267.8 381.8,266.9 389.4,268.6 400.8,271.1 412.2,273.5 416,273.9 419.8,271.6 431.3,273.0 442.7,275.8 454,279.2 461.4,279.6 472.8,279.6 488,279.6 495.6,278.7 501.3,276.8 510.8,278.7 518.4,282.5 526,292.9 533.7,301.5 541.3,308.1 547,310.0 550.8,312.9 559,312.5 570.4,311.2 581.8,308.5 593.2,305.3 602.4,302.4"/>
<polyline fill="none" stroke="#0808d8" stroke-width="1.45" stroke-linejoin="round" stroke-linecap="round" points="12.5,298.2 27.3,298.2 44.5,297.4 61.8,293.9 79.1,290.1 87.7,292.2 105,297.4 117,302.6 128.6,309.5 137.3,313.8 145.9,317.2 154.5,317.2 166.6,315.0 177,312.9 185.6,312.1 197.7,312.9 215,314.3 223.6,317.2 232.3,320.7 241.4,324.4 252.8,330.1 262.3,330.7 273.7,329.1 283.2,324.4 292.7,315.8 302.2,307.3 309.8,298.7 319.4,288.3 327,281.6 332.7,276.9 340.3,274.8 351.4,272.1 364.7,271.2 378,268.3 389.4,267.4 400.8,269.3 416,270.6 431.3,270.6 442.7,272.1 454,274.0 461,275.5 469,277.4 488,277.8 499.4,276.9 510.8,277.4 520.3,279.7 529.8,285.4 541.3,294.0 550.8,299.7 560.6,303.3 570.4,305.4 581.8,305.4 593.2,304.4 602.4,303.5"/>
<polyline fill="none" stroke="#0808d8" stroke-width="1.45" stroke-linejoin="round" stroke-linecap="round" points="12.5,299.1 27.3,299.1 44.5,298.3 61.8,294.8 79.1,291.0 87.7,293.1 105,298.3 117,303.5 128.6,310.4 137.3,314.7 145.9,318.1 154.5,318.1 166.6,315.9 177,313.8 185.6,313.0 197.7,313.8 215,315.2 223.6,318.1 232.3,321.6 241.4,325.3 252.8,331.0 262.3,331.6 273.7,330.0 283.2,325.3 292.7,316.7 302.2,308.2 309.8,299.6 319.4,289.2 327,282.5 332.7,277.8 340.3,275.7 351.4,273.0 364.7,272.1 378,269.2 389.4,268.3 400.8,270.2 416,271.5 431.3,271.5 442.7,273.0 454,274.9 461,276.4 469,278.3 488,278.7 499.4,277.8 510.8,278.3 520.3,280.6 529.8,286.3 541.3,294.9 550.8,300.6 560.6,304.2 570.4,306.3 581.8,306.3 593.2,305.3 602.4,304.4"/>
<polyline fill="none" stroke="#0808d8" stroke-width="1.45" stroke-linejoin="round" stroke-linecap="round" points="12.5,300.0 27.3,300.0 44.5,299.2 61.8,295.7 79.1,291.9 87.7,294.0 105,299.2 117,304.4 128.6,311.3 137.3,315.6 145.9,319.0 154.5,319.0 166.6,316.8 177,314.7 185.6,313.9 197.7,314.7 215,316.1 223.6,319.0 232.3,322.5 241.4,326.2 252.8,331.9 262.3,332.5 273.7,330.9 283.2,326.2 292.7,317.6 302.2,309.1 309.8,300.5 319.4,290.1 327,283.4 332.7,278.7 340.3,276.6 351.4,273.9 364.7,273.0 378,270.1 389.4,269.2 400.8,271.1 416,272.4 431.3,272.4 442.7,273.9 454,275.8 461,277.3 469,279.2 488,279.6 499.4,278.7 510.8,279.2 520.3,281.5 529.8,287.2 541.3,295.8 550.8,301.5 560.6,305.1 570.4,307.2 581.8,307.2 593.2,306.2 602.4,305.3"/>
<line x1="13.45" y1="281.5" x2="13.45" y2="281.2" stroke="#3fe4ea" stroke-width="3.6" stroke-linecap="round"/>
<line x1="18.64" y1="281.5" x2="18.64" y2="281.2" stroke="#3fe4ea" stroke-width="3.6" stroke-linecap="round"/>
<line x1="22.95" y1="281.5" x2="22.95" y2="281.2" stroke="#3fe4ea" stroke-width="3.6" stroke-linecap="round"/>
<line x1="27.79" y1="281.5" x2="27.79" y2="281.2" stroke="#3fe4ea" stroke-width="3.6" stroke-linecap="round"/>
<line x1="32.45" y1="281.5" x2="32.45" y2="281.2" stroke="#3fe4ea" stroke-width="3.6" stroke-linecap="round"/>
<line x1="36.77" y1="281.0" x2="36.77" y2="281.7" stroke="#3fe4ea" stroke-width="3.6" stroke-linecap="round"/>
<line x1="41.95" y1="280.6" x2="41.95" y2="282.1" stroke="#3fe4ea" stroke-width="3.6" stroke-linecap="round"/>
<line x1="46.27" y1="280.3" x2="46.27" y2="282.4" stroke="#3fe4ea" stroke-width="3.6" stroke-linecap="round"/>
<line x1="51.45" y1="279.9" x2="51.45" y2="282.4" stroke="#3fe4ea" stroke-width="3.6" stroke-linecap="round"/>
<line x1="55.77" y1="276.8" x2="55.77" y2="281.4" stroke="#3fe4ea" stroke-width="3.6" stroke-linecap="round"/>
<line x1="60.60" y1="276.0" x2="60.60" y2="281.4" stroke="#3fe4ea" stroke-width="3.6" stroke-linecap="round"/>
<line x1="65.27" y1="274.7" x2="65.27" y2="281.7" stroke="#3fe4ea" stroke-width="3.6" stroke-linecap="round"/>
<line x1="69.93" y1="276.0" x2="69.93" y2="281.4" stroke="#3fe4ea" stroke-width="3.6" stroke-linecap="round"/>
<line x1="74.77" y1="278.5" x2="74.77" y2="281.0" stroke="#3fe4ea" stroke-width="3.6" stroke-linecap="round"/>
<line x1="79.08" y1="279.4" x2="79.08" y2="281.4" stroke="#3fe4ea" stroke-width="3.6" stroke-linecap="round"/>
<line x1="83.92" y1="280.8" x2="83.92" y2="283.5" stroke="#3fe4ea" stroke-width="3.6" stroke-linecap="round"/>
<line x1="88.58" y1="281.1" x2="88.58" y2="286.9" stroke="#3fe4ea" stroke-width="3.6" stroke-linecap="round"/>
<line x1="92.90" y1="281.1" x2="92.90" y2="287.8" stroke="#3fe4ea" stroke-width="3.6" stroke-linecap="round"/>
<line x1="98.08" y1="281.1" x2="98.08" y2="288.3" stroke="#3fe4ea" stroke-width="3.6" stroke-linecap="round"/>
<line x1="102.75" y1="281.1" x2="102.75" y2="288.6" stroke="#3fe4ea" stroke-width="3.6" stroke-linecap="round"/>
<line x1="107.58" y1="281.1" x2="107.58" y2="289.5" stroke="#3fe4ea" stroke-width="3.6" stroke-linecap="round"/>
<line x1="111.90" y1="281.1" x2="111.90" y2="290.7" stroke="#3fe4ea" stroke-width="3.6" stroke-linecap="round"/>
<line x1="116.56" y1="281.1" x2="116.56" y2="291.7" stroke="#3fe4ea" stroke-width="3.6" stroke-linecap="round"/>
<line x1="121.40" y1="281.1" x2="121.40" y2="292.4" stroke="#3fe4ea" stroke-width="3.6" stroke-linecap="round"/>
<line x1="121.38" y1="281.3" x2="121.38" y2="293.3" stroke="#3fe4ea" stroke-width="3.6" stroke-linecap="round"/>
<line x1="125.70" y1="281.3" x2="125.70" y2="293.3" stroke="#3fe4ea" stroke-width="3.6" stroke-linecap="round"/>
<line x1="130.36" y1="281.3" x2="130.36" y2="292.1" stroke="#3fe4ea" stroke-width="3.6" stroke-linecap="round"/>
<line x1="135.03" y1="281.3" x2="135.03" y2="290.7" stroke="#3fe4ea" stroke-width="3.6" stroke-linecap="round"/>
<line x1="139.52" y1="281.3" x2="139.52" y2="289.5" stroke="#3fe4ea" stroke-width="3.6" stroke-linecap="round"/>
<line x1="144.53" y1="281.3" x2="144.53" y2="286.9" stroke="#3fe4ea" stroke-width="3.6" stroke-linecap="round"/>
<line x1="149.36" y1="281.1" x2="149.36" y2="285.2" stroke="#3fe4ea" stroke-width="3.6" stroke-linecap="round"/>
<line x1="153.68" y1="281.3" x2="153.68" y2="283.5" stroke="#3fe4ea" stroke-width="3.6" stroke-linecap="round"/>
<line x1="158.34" y1="281.3" x2="158.34" y2="281.0" stroke="#3fe4ea" stroke-width="3.6" stroke-linecap="round"/>
<line x1="163.18" y1="280.3" x2="163.18" y2="281.0" stroke="#3fe4ea" stroke-width="3.6" stroke-linecap="round"/>
<line x1="167.50" y1="279.4" x2="167.50" y2="281.0" stroke="#3fe4ea" stroke-width="3.6" stroke-linecap="round"/>
<line x1="172.68" y1="278.5" x2="172.68" y2="281.0" stroke="#3fe4ea" stroke-width="3.6" stroke-linecap="round"/>
<line x1="176.99" y1="278.5" x2="176.99" y2="281.0" stroke="#3fe4ea" stroke-width="3.6" stroke-linecap="round"/>
<line x1="181.66" y1="278.5" x2="181.66" y2="281.4" stroke="#3fe4ea" stroke-width="3.6" stroke-linecap="round"/>
<line x1="186.49" y1="278.5" x2="186.49" y2="281.4" stroke="#3fe4ea" stroke-width="3.6" stroke-linecap="round"/>
<line x1="191.16" y1="281.3" x2="191.16" y2="281.0" stroke="#3fe4ea" stroke-width="3.6" stroke-linecap="round"/>
<line x1="195.99" y1="281.3" x2="195.99" y2="281.0" stroke="#3fe4ea" stroke-width="3.6" stroke-linecap="round"/>
<line x1="200.31" y1="281.3" x2="200.31" y2="283.5" stroke="#3fe4ea" stroke-width="3.6" stroke-linecap="round"/>
<line x1="204.97" y1="281.3" x2="204.97" y2="283.1" stroke="#3fe4ea" stroke-width="3.6" stroke-linecap="round"/>
<line x1="209.81" y1="281.3" x2="209.81" y2="282.1" stroke="#3fe4ea" stroke-width="3.6" stroke-linecap="round"/>
<line x1="214.47" y1="281.3" x2="214.47" y2="282.1" stroke="#3fe4ea" stroke-width="3.6" stroke-linecap="round"/>
<line x1="219.31" y1="281.3" x2="219.31" y2="286.0" stroke="#3fe4ea" stroke-width="3.6" stroke-linecap="round"/>
<line x1="223.63" y1="281.3" x2="223.63" y2="287.8" stroke="#3fe4ea" stroke-width="3.6" stroke-linecap="round"/>
<line x1="228.46" y1="281.3" x2="228.46" y2="289.5" stroke="#3fe4ea" stroke-width="3.6" stroke-linecap="round"/>
<line x1="233.13" y1="281.3" x2="233.13" y2="290.4" stroke="#3fe4ea" stroke-width="3.6" stroke-linecap="round"/>
<line x1="237.96" y1="281.3" x2="237.96" y2="290.4" stroke="#3fe4ea" stroke-width="3.6" stroke-linecap="round"/>
<line x1="237.98" y1="281.6" x2="237.98" y2="289.7" stroke="#3fe4ea" stroke-width="3.6" stroke-linecap="round"/>
<line x1="242.36" y1="281.6" x2="242.36" y2="289.1" stroke="#3fe4ea" stroke-width="3.6" stroke-linecap="round"/>
<line x1="247.11" y1="281.6" x2="247.11" y2="288.2" stroke="#3fe4ea" stroke-width="3.6" stroke-linecap="round"/>
<line x1="251.48" y1="281.6" x2="251.48" y2="286.3" stroke="#3fe4ea" stroke-width="3.6" stroke-linecap="round"/>
<line x1="256.24" y1="281.6" x2="256.24" y2="284.4" stroke="#3fe4ea" stroke-width="3.6" stroke-linecap="round"/>
<line x1="260.80" y1="281.6" x2="260.80" y2="281.5" stroke="#3fe4ea" stroke-width="3.6" stroke-linecap="round"/>
<line x1="265.55" y1="281.6" x2="265.55" y2="281.5" stroke="#3fe4ea" stroke-width="3.6" stroke-linecap="round"/>
<line x1="270.30" y1="281.6" x2="270.30" y2="281.5" stroke="#3fe4ea" stroke-width="3.6" stroke-linecap="round"/>
<line x1="275.25" y1="278.8" x2="275.25" y2="281.5" stroke="#3fe4ea" stroke-width="3.6" stroke-linecap="round"/>
<line x1="279.81" y1="275.5" x2="279.81" y2="281.5" stroke="#3fe4ea" stroke-width="3.6" stroke-linecap="round"/>
<line x1="284.56" y1="272.1" x2="284.56" y2="281.5" stroke="#3fe4ea" stroke-width="3.6" stroke-linecap="round"/>
<line x1="289.32" y1="268.3" x2="289.32" y2="281.5" stroke="#3fe4ea" stroke-width="3.6" stroke-linecap="round"/>
<line x1="293.69" y1="266.4" x2="293.69" y2="281.5" stroke="#3fe4ea" stroke-width="3.6" stroke-linecap="round"/>
<line x1="298.44" y1="262.2" x2="298.44" y2="281.5" stroke="#3fe4ea" stroke-width="3.6" stroke-linecap="round"/>
<line x1="303.19" y1="259.2" x2="303.19" y2="281.5" stroke="#3fe4ea" stroke-width="3.6" stroke-linecap="round"/>
<line x1="307.57" y1="258.8" x2="307.57" y2="281.5" stroke="#3fe4ea" stroke-width="3.6" stroke-linecap="round"/>
<line x1="312.32" y1="259.8" x2="312.32" y2="281.5" stroke="#3fe4ea" stroke-width="3.6" stroke-linecap="round"/>
<line x1="317.45" y1="261.7" x2="317.45" y2="281.5" stroke="#3fe4ea" stroke-width="3.6" stroke-linecap="round"/>
<line x1="321.83" y1="265.5" x2="321.83" y2="281.5" stroke="#3fe4ea" stroke-width="3.6" stroke-linecap="round"/>
<line x1="326.39" y1="267.9" x2="326.39" y2="281.5" stroke="#3fe4ea" stroke-width="3.6" stroke-linecap="round"/>
<line x1="330.76" y1="270.2" x2="330.76" y2="281.5" stroke="#3fe4ea" stroke-width="3.6" stroke-linecap="round"/>
<line x1="335.51" y1="274.0" x2="335.51" y2="281.5" stroke="#3fe4ea" stroke-width="3.6" stroke-linecap="round"/>
<line x1="340.27" y1="275.9" x2="340.27" y2="281.5" stroke="#3fe4ea" stroke-width="3.6" stroke-linecap="round"/>
<line x1="340.95" y1="276.9" x2="340.95" y2="281.5" stroke="#3fe4ea" stroke-width="3.6" stroke-linecap="round"/>
<line x1="345.32" y1="277.8" x2="345.32" y2="281.5" stroke="#3fe4ea" stroke-width="3.6" stroke-linecap="round"/>
<line x1="349.89" y1="278.8" x2="349.89" y2="281.5" stroke="#3fe4ea" stroke-width="3.6" stroke-linecap="round"/>
<line x1="354.64" y1="279.3" x2="354.64" y2="281.5" stroke="#3fe4ea" stroke-width="3.6" stroke-linecap="round"/>
<line x1="359.01" y1="279.7" x2="359.01" y2="281.5" stroke="#3fe4ea" stroke-width="3.6" stroke-linecap="round"/>
<line x1="363.76" y1="279.7" x2="363.76" y2="281.5" stroke="#3fe4ea" stroke-width="3.6" stroke-linecap="round"/>
<line x1="368.52" y1="279.7" x2="368.52" y2="281.5" stroke="#3fe4ea" stroke-width="3.6" stroke-linecap="round"/>
<line x1="373.27" y1="278.8" x2="373.27" y2="281.5" stroke="#3fe4ea" stroke-width="3.6" stroke-linecap="round"/>
<line x1="378.02" y1="278.8" x2="378.02" y2="281.5" stroke="#3fe4ea" stroke-width="3.6" stroke-linecap="round"/>
<line x1="382.40" y1="279.3" x2="382.40" y2="281.5" stroke="#3fe4ea" stroke-width="3.6" stroke-linecap="round"/>
<line x1="387.15" y1="280.1" x2="387.15" y2="281.5" stroke="#3fe4ea" stroke-width="3.6" stroke-linecap="round"/>
<line x1="391.71" y1="281.6" x2="391.71" y2="281.5" stroke="#3fe4ea" stroke-width="3.6" stroke-linecap="round"/>
<line x1="396.46" y1="281.6" x2="396.46" y2="282.5" stroke="#3fe4ea" stroke-width="3.6" stroke-linecap="round"/>
<line x1="401.22" y1="281.6" x2="401.22" y2="283.4" stroke="#3fe4ea" stroke-width="3.6" stroke-linecap="round"/>
<line x1="405.97" y1="281.6" x2="405.97" y2="283.4" stroke="#3fe4ea" stroke-width="3.6" stroke-linecap="round"/>
<line x1="410.72" y1="281.6" x2="410.72" y2="283.0" stroke="#3fe4ea" stroke-width="3.6" stroke-linecap="round"/>
<line x1="415.48" y1="281.6" x2="415.48" y2="282.5" stroke="#3fe4ea" stroke-width="3.6" stroke-linecap="round"/>
<line x1="419.85" y1="281.6" x2="419.85" y2="281.5" stroke="#3fe4ea" stroke-width="3.6" stroke-linecap="round"/>
<line x1="424.60" y1="281.6" x2="424.60" y2="282.5" stroke="#3fe4ea" stroke-width="3.6" stroke-linecap="round"/>
<line x1="429.35" y1="281.6" x2="429.35" y2="283.0" stroke="#3fe4ea" stroke-width="3.6" stroke-linecap="round"/>
<line x1="433.73" y1="281.6" x2="433.73" y2="283.0" stroke="#3fe4ea" stroke-width="3.6" stroke-linecap="round"/>
<line x1="438.48" y1="281.6" x2="438.48" y2="283.4" stroke="#3fe4ea" stroke-width="3.6" stroke-linecap="round"/>
<line x1="443.61" y1="281.6" x2="443.61" y2="284.9" stroke="#3fe4ea" stroke-width="3.6" stroke-linecap="round"/>
<line x1="447.98" y1="281.6" x2="447.98" y2="284.9" stroke="#3fe4ea" stroke-width="3.6" stroke-linecap="round"/>
<line x1="452.85" y1="281.6" x2="452.85" y2="284.9" stroke="#3fe4ea" stroke-width="3.6" stroke-linecap="round"/>
<line x1="457.22" y1="281.6" x2="457.22" y2="284.9" stroke="#3fe4ea" stroke-width="3.6" stroke-linecap="round"/>
<line x1="461.98" y1="281.6" x2="461.98" y2="284.9" stroke="#3fe4ea" stroke-width="3.6" stroke-linecap="round"/>
<line x1="466.73" y1="281.6" x2="466.73" y2="284.9" stroke="#3fe4ea" stroke-width="3.6" stroke-linecap="round"/>
<line x1="471.29" y1="281.6" x2="471.29" y2="284.4" stroke="#3fe4ea" stroke-width="3.6" stroke-linecap="round"/>
<line x1="476.05" y1="281.6" x2="476.05" y2="283.4" stroke="#3fe4ea" stroke-width="3.6" stroke-linecap="round"/>
<line x1="480.80" y1="281.6" x2="480.80" y2="281.9" stroke="#3fe4ea" stroke-width="3.6" stroke-linecap="round"/>
<line x1="485.55" y1="281.6" x2="485.55" y2="281.5" stroke="#3fe4ea" stroke-width="3.6" stroke-linecap="round"/>
<line x1="490.30" y1="281.6" x2="490.30" y2="281.5" stroke="#3fe4ea" stroke-width="3.6" stroke-linecap="round"/>
<line x1="495.06" y1="281.6" x2="495.06" y2="281.5" stroke="#3fe4ea" stroke-width="3.6" stroke-linecap="round"/>
<line x1="499.43" y1="279.7" x2="499.43" y2="281.5" stroke="#3fe4ea" stroke-width="3.6" stroke-linecap="round"/>
<line x1="504.18" y1="280.7" x2="504.18" y2="281.5" stroke="#3fe4ea" stroke-width="3.6" stroke-linecap="round"/>
<line x1="508.94" y1="281.6" x2="508.94" y2="281.5" stroke="#3fe4ea" stroke-width="3.6" stroke-linecap="round"/>
<line x1="513.69" y1="281.6" x2="513.69" y2="283.4" stroke="#3fe4ea" stroke-width="3.6" stroke-linecap="round"/>
<line x1="518.06" y1="281.6" x2="518.06" y2="285.3" stroke="#3fe4ea" stroke-width="3.6" stroke-linecap="round"/>
<line x1="522.81" y1="281.6" x2="522.81" y2="288.2" stroke="#3fe4ea" stroke-width="3.6" stroke-linecap="round"/>
<line x1="527.57" y1="281.6" x2="527.57" y2="291.0" stroke="#3fe4ea" stroke-width="3.6" stroke-linecap="round"/>
<line x1="532.32" y1="281.6" x2="532.32" y2="293.9" stroke="#3fe4ea" stroke-width="3.6" stroke-linecap="round"/>
<line x1="537.07" y1="281.6" x2="537.07" y2="295.8" stroke="#3fe4ea" stroke-width="3.6" stroke-linecap="round"/>
<line x1="541.63" y1="281.6" x2="541.63" y2="295.8" stroke="#3fe4ea" stroke-width="3.6" stroke-linecap="round"/>
<line x1="541.90" y1="281.6" x2="541.90" y2="295.8" stroke="#3fe4ea" stroke-width="3.6" stroke-linecap="round"/>
<line x1="546.65" y1="281.6" x2="546.65" y2="293.9" stroke="#3fe4ea" stroke-width="3.6" stroke-linecap="round"/>
<line x1="551.03" y1="281.6" x2="551.03" y2="291.0" stroke="#3fe4ea" stroke-width="3.6" stroke-linecap="round"/>
<line x1="555.78" y1="281.6" x2="555.78" y2="289.1" stroke="#3fe4ea" stroke-width="3.6" stroke-linecap="round"/>
<line x1="560.53" y1="281.6" x2="560.53" y2="287.2" stroke="#3fe4ea" stroke-width="3.6" stroke-linecap="round"/>
<line x1="565.29" y1="281.6" x2="565.29" y2="285.7" stroke="#3fe4ea" stroke-width="3.6" stroke-linecap="round"/>
<line x1="569.85" y1="281.6" x2="569.85" y2="284.4" stroke="#3fe4ea" stroke-width="3.6" stroke-linecap="round"/>
<line x1="574.60" y1="281.6" x2="574.60" y2="283.0" stroke="#3fe4ea" stroke-width="3.6" stroke-linecap="round"/>
<line x1="579.35" y1="281.6" x2="579.35" y2="281.9" stroke="#3fe4ea" stroke-width="3.6" stroke-linecap="round"/>
<line x1="584.11" y1="281.6" x2="584.11" y2="281.5" stroke="#3fe4ea" stroke-width="3.6" stroke-linecap="round"/>
<line x1="588.86" y1="281.6" x2="588.86" y2="281.5" stroke="#3fe4ea" stroke-width="3.6" stroke-linecap="round"/>
<line x1="593.23" y1="279.7" x2="593.23" y2="281.5" stroke="#3fe4ea" stroke-width="3.6" stroke-linecap="round"/>
<line x1="597.98" y1="278.8" x2="597.98" y2="281.5" stroke="#3fe4ea" stroke-width="3.6" stroke-linecap="round"/>
<line x1="602.36" y1="278.8" x2="602.36" y2="281.5" stroke="#3fe4ea" stroke-width="3.6" stroke-linecap="round"/>
</g>
<rect x="13" y="255" width="34" height="11.5" fill="#ffffff"/>
<text x="14" y="265.3" font-size="9" fill="#000060" stroke="#000060" stroke-width="0.25" textLength="32.5" lengthAdjust="spacingAndGlyphs">MACD</text>
<line x1="12.5" y1="349.5" x2="602" y2="349.5" stroke="#1a1a9a" stroke-width="1.3"/>
<line x1="12.5" y1="399.5" x2="602" y2="399.5" stroke="#1a1a9a" stroke-width="1.3"/>
<rect x="13" y="347.5" width="20.5" height="10.5" fill="#ffffff"/>
<text x="14" y="357" font-size="9" fill="#dc8428" textLength="18.5" lengthAdjust="spacingAndGlyphs">RSI</text>
<g clip-path="url(#cr)">
<polyline fill="none" stroke="#f28a14" stroke-width="3.0" stroke-linejoin="round" stroke-linecap="round" points="12.5,396.1 15.1,390.1 19.3,386.4 22.7,387.6 27,390.5 32.1,385.4 41.4,385.4 45.7,381.7 50.7,382.5 55.8,374 60.9,368.1 65.2,368.9 69.4,374 74.5,385.9 78.8,382 81.3,388.4 83.3,397.8"/>
<polyline fill="none" stroke="#1fe626" stroke-width="3.0" stroke-linejoin="round" stroke-linecap="round" points="83.3,397.8 85.5,400.0 88.1,400.7 90.5,398"/>
<polyline fill="none" stroke="#f28a14" stroke-width="3.0" stroke-linejoin="round" stroke-linecap="round" points="90.5,398 93.2,395.2 96.6,396.6 98.4,395.1 102.2,391.6"/>
<polyline fill="none" stroke="#1fe626" stroke-width="3.0" stroke-linejoin="round" stroke-linecap="round" points="102.2,391.6 105.2,397.2 108.5,400.3 110.3,403.1 115.3,406.3 120.4,408.5 125.5,409.2 129,408.5 135.7,407 142.5,406 147.6,403.1 152.7,399.7 155.3,399.2"/>
<polyline fill="none" stroke="#f28a14" stroke-width="3.0" stroke-linejoin="round" stroke-linecap="round" points="155.3,399.2 158.7,400.6 162.9,397.2 166.3,398"/>
<polyline fill="none" stroke="#1fe626" stroke-width="3.0" stroke-linejoin="round" stroke-linecap="round" points="166.3,398 171.4,399.2 177.3,403.1 181.6,399.7 186.7,401.4 191.8,409.9 196,404.8 201.1,410.4 205.2,399.6"/>
<polyline fill="none" stroke="#f28a14" stroke-width="3.0" stroke-linejoin="round" stroke-linecap="round" points="205.2,399.6 209.3,391.9 213.5,396.9"/>
<polyline fill="none" stroke="#1fe626" stroke-width="3.0" stroke-linejoin="round" stroke-linecap="round" points="213.5,396.9 217.7,406.3 223.7,408.8 230.5,410.2 235.6,410.5 248.3,409.7 254.2,403.7 259.3,401.7 263.6,402.9 269.5,406.3"/>
<polyline fill="none" stroke="#f28a14" stroke-width="3.0" stroke-linejoin="round" stroke-linecap="round" points="269.5,406.3 272.9,398.6 278,384.2 283.1,375.7 289,367.2 293.3,373.2 298.4,356.2 302.6,354.5 308.6,357 315,357.9 317.5,358.7 321.8,368.1 326,363.8 331.1,364.3 336.2,372.3 343.9,369.8 349.8,368.1 355.7,365.5 364.2,364.7 369.3,360.9 373.6,359.9 377.8,360.9 382.9,358.7 388,363.8 397.3,373.2 403.3,369.8 410.9,367.2 416,368.9 419.4,353.6 424.5,373.2 430.4,370.6 433.5,368.9 442.8,378.3 447.1,374 452.2,376.6 460.7,374 470.8,377.4 480.2,367.2 487.8,367.2 493.8,368.9 499.7,357.5 503.9,371.5 508.2,380 512.4,385.1 517.5,385.9 521.8,394.4"/>
<polyline fill="none" stroke="#1fe626" stroke-width="3.0" stroke-linejoin="round" stroke-linecap="round" points="521.8,394.4 526.9,401.2 533.7,402.9 540.9,407.1"/>
<polyline fill="none" stroke="#f28a14" stroke-width="3.0" stroke-linejoin="round" stroke-linecap="round" points="540.9,407.1 543.5,402"/>
<polyline fill="none" stroke="#1fe626" stroke-width="3.0" stroke-linejoin="round" stroke-linecap="round" points="543.5,402 546.9,396.6 550.3,400.3"/>
<polyline fill="none" stroke="#f28a14" stroke-width="3.0" stroke-linejoin="round" stroke-linecap="round" points="550.3,400.3 553.7,394.4 557.9,391.8 562.2,392.2 569,395.2 578.3,390.5 583.4,392.7 589.3,388.1 593.6,385.4 598.7,385.4 602.9,387.6"/>
</g>
<rect x="12.5" y="27.5" width="639.0" height="221.0" fill="none" stroke="#868686" stroke-width="1"/>
<rect x="12.5" y="254.5" width="639.0" height="86.0" fill="none" stroke="#868686" stroke-width="1"/>
<rect x="12.5" y="346.5" width="639.0" height="70.0" fill="none" stroke="#868686" stroke-width="1"/>
<text class="ax" x="659.5" y="40.0" textLength="38" lengthAdjust="spacingAndGlyphs">0.9300</text>
<text class="ax" x="659.5" y="83.0" textLength="38" lengthAdjust="spacingAndGlyphs">0.9200</text>
<text class="ax" x="659.5" y="126.0" textLength="38" lengthAdjust="spacingAndGlyphs">0.9100</text>
<text class="ax" x="659.5" y="168.0" textLength="38" lengthAdjust="spacingAndGlyphs">0.9000</text>
<rect x="658.7" y="203" width="39" height="11.8" fill="#eba92a"/>
<text x="659.6" y="213" font-size="9.1" fill="#ffffff" textLength="37.6" lengthAdjust="spacingAndGlyphs">0.8891</text>
<text class="ax" x="659.5" y="287.0" textLength="39.5" lengthAdjust="spacingAndGlyphs">+0.000</text>
<text class="ax" x="659.5" y="325.0" textLength="35.5" lengthAdjust="spacingAndGlyphs">-0.005</text>
<text class="ax" x="659.5" y="367.0" textLength="12.5" lengthAdjust="spacingAndGlyphs">60</text>
<text class="ax" x="659.5" y="392.0" textLength="12.5" lengthAdjust="spacingAndGlyphs">40</text>
<line x1="122.5" y1="424" x2="122.5" y2="439" stroke="#cfd8e2" stroke-width="1"/>
<line x1="234.4" y1="424" x2="234.4" y2="439" stroke="#cfd8e2" stroke-width="1"/>
<line x1="332.8" y1="424" x2="332.8" y2="439" stroke="#cfd8e2" stroke-width="1"/>
<line x1="444.5" y1="424" x2="444.5" y2="439" stroke="#cfd8e2" stroke-width="1"/>
<line x1="556.7" y1="424" x2="556.7" y2="439" stroke="#cfd8e2" stroke-width="1"/>
<line x1="23.5" y1="416.5" x2="23.5" y2="420" stroke="#707070" stroke-width="1"/>
<line x1="79.5" y1="416.5" x2="79.5" y2="420" stroke="#707070" stroke-width="1"/>
<line x1="135.5" y1="416.5" x2="135.5" y2="420" stroke="#707070" stroke-width="1"/>
<line x1="191.5" y1="416.5" x2="191.5" y2="420" stroke="#707070" stroke-width="1"/>
<line x1="247.5" y1="416.5" x2="247.5" y2="420" stroke="#707070" stroke-width="1"/>
<line x1="289.5" y1="416.5" x2="289.5" y2="420" stroke="#707070" stroke-width="1"/>
<line x1="345.5" y1="416.5" x2="345.5" y2="420" stroke="#707070" stroke-width="1"/>
<line x1="401.5" y1="416.5" x2="401.5" y2="420" stroke="#707070" stroke-width="1"/>
<line x1="457.5" y1="416.5" x2="457.5" y2="420" stroke="#707070" stroke-width="1"/>
<line x1="513.5" y1="416.5" x2="513.5" y2="420" stroke="#707070" stroke-width="1"/>
<line x1="569.5" y1="416.5" x2="569.5" y2="420" stroke="#707070" stroke-width="1"/>
<line x1="625.5" y1="416.5" x2="625.5" y2="420" stroke="#707070" stroke-width="1"/>
<rect x="12.9" y="409.3" width="66.0" height="15.4" fill="#7b9dbd"/>
<text class="dt" x="18.9" y="420.6" textLength="54.4" lengthAdjust="spacingAndGlyphs">29.1.2009</text>
<rect x="122.8" y="409.3" width="65.0" height="15.4" fill="#7b9dbd"/>
<text class="dt" x="128.8" y="420.6" textLength="54.4" lengthAdjust="spacingAndGlyphs">30.1.2009</text>
<rect x="234.7" y="409.3" width="58.3" height="15.4" fill="#7b9dbd"/>
<text class="dt" x="240.7" y="420.6" textLength="47.3" lengthAdjust="spacingAndGlyphs">2.2.2009</text>
<rect x="333.1" y="409.3" width="57.7" height="15.4" fill="#7b9dbd"/>
<text class="dt" x="339.1" y="420.6" textLength="47.3" lengthAdjust="spacingAndGlyphs">3.2.2009</text>
<rect x="444.8" y="409.3" width="58.3" height="15.4" fill="#7b9dbd"/>
<text class="dt" x="450.8" y="420.6" textLength="47.3" lengthAdjust="spacingAndGlyphs">4.2.2009</text>
<rect x="557" y="409.3" width="57.9" height="15.4" fill="#7b9dbd"/>
<text class="dt" x="563.0" y="420.6" textLength="47.3" lengthAdjust="spacingAndGlyphs">5.2.2009</text>
<text class="ax" x="16.7" y="436.9" textLength="6.4" lengthAdjust="spacingAndGlyphs">0</text>
<text class="ax" style="fill:#a2a2a2" x="23.8" y="436.9" textLength="6.4" lengthAdjust="spacingAndGlyphs">0</text>
<text class="ax" x="66.3" y="436.9" textLength="12.8" lengthAdjust="spacingAndGlyphs">12</text>
<text class="sm" x="79.6" y="437">ч</text>
<text class="ax" x="128.7" y="436.9" textLength="6.4" lengthAdjust="spacingAndGlyphs">0</text>
<text class="ax" style="fill:#a2a2a2" x="135.8" y="436.9" textLength="6.4" lengthAdjust="spacingAndGlyphs">0</text>
<text class="ax" x="178.3" y="436.9" textLength="12.8" lengthAdjust="spacingAndGlyphs">12</text>
<text class="sm" x="191.6" y="437">ч</text>
<text class="ax" x="240.7" y="436.9" textLength="6.4" lengthAdjust="spacingAndGlyphs">3</text>
<text class="sm" x="247.6" y="437">ч</text>
<text class="ax" x="276.3" y="436.9" textLength="12.8" lengthAdjust="spacingAndGlyphs">12</text>
<text class="sm" x="289.6" y="437">ч</text>
<text class="ax" x="338.7" y="436.9" textLength="6.4" lengthAdjust="spacingAndGlyphs">0</text>
<text class="ax" style="fill:#a2a2a2" x="345.8" y="436.9" textLength="6.4" lengthAdjust="spacingAndGlyphs">0</text>
<text class="ax" x="388.3" y="436.9" textLength="12.8" lengthAdjust="spacingAndGlyphs">12</text>
<text class="sm" x="401.6" y="437">ч</text>
<text class="ax" x="450.7" y="436.9" textLength="6.4" lengthAdjust="spacingAndGlyphs">0</text>
<text class="ax" style="fill:#a2a2a2" x="457.8" y="436.9" textLength="6.4" lengthAdjust="spacingAndGlyphs">0</text>
<text class="ax" x="500.3" y="436.9" textLength="12.8" lengthAdjust="spacingAndGlyphs">12</text>
<text class="sm" x="513.6" y="437">ч</text>
<text class="ax" x="562.7" y="436.9" textLength="6.4" lengthAdjust="spacingAndGlyphs">0</text>
<text class="ax" style="fill:#a2a2a2" x="569.8" y="436.9" textLength="6.4" lengthAdjust="spacingAndGlyphs">0</text>
<text class="ax" x="612.3" y="436.9" textLength="12.8" lengthAdjust="spacingAndGlyphs">12</text>
<text class="sm" x="625.6" y="437">ч</text>
</svg></body></html>
